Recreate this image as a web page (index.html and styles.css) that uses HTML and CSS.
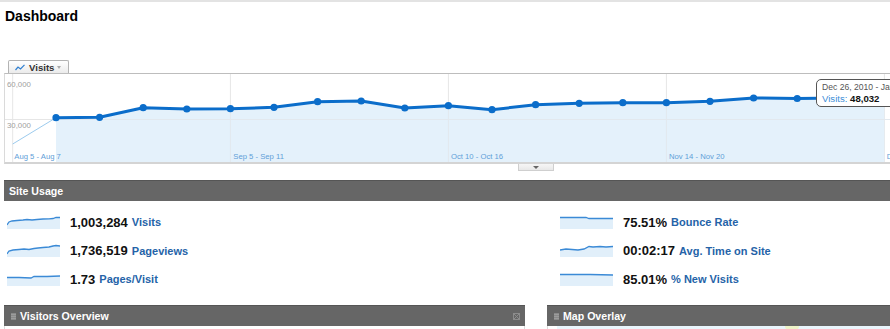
FILE: index.html
```html
<!DOCTYPE html>
<html>
<head>
<meta charset="utf-8">
<link rel="stylesheet" href="styles.css">
</head>
<body>
<div class="topline"></div>
<div class="page">
  <h1 class="title">Dashboard</h1>
  <div class="tabs">
    <div class="tab">
      <svg class="tab-icon" width="10" height="7" viewBox="0 0 10 7"><polyline points="0.5,6 3,3 5.5,5 9.5,0.8" fill="none" stroke="#2f7fd0" stroke-width="1.2"/></svg>
      <span class="tab-label">Visits</span>
      <span class="tab-caret"></span>
    </div>
  </div>
  <div class="chart">
    <svg class="chart-svg" width="885" height="88" viewBox="0 0 885 88">
      <g stroke="#e6e6e6" stroke-width="1">
        <line x1="7.7" y1="0" x2="7.7" y2="88"/>
        <line x1="225.4" y1="0" x2="225.4" y2="88"/>
        <line x1="443.4" y1="0" x2="443.4" y2="88"/>
        <line x1="661.4" y1="0" x2="661.4" y2="88"/>
        <line x1="879.4" y1="0" x2="879.4" y2="88"/>
        <line x1="0" y1="45.5" x2="885" y2="45.5"/>
      </g>
      <polygon fill="#e4f1fb" points="51,88 51,43.7 94.6,43.3 138.2,33.7 181.8,35 225.4,34.7 269,33.3 312.6,27.7 356.2,27 399.8,34 443.4,31.7 487,35.7 530.6,30.7 574.2,29.3 617.8,28.7 661.4,28.7 705,27.3 748.6,24 792.2,24.5 835.8,24 879.4,24 879.4,88"/>
      <g stroke="#e2e8ee" stroke-width="1">
        <line x1="51" y1="45.5" x2="885" y2="45.5"/>
        <line x1="225.4" y1="34" x2="225.4" y2="88"/>
        <line x1="443.4" y1="31" x2="443.4" y2="88"/>
        <line x1="661.4" y1="28" x2="661.4" y2="88"/>
      </g>
      <line x1="7.7" y1="70" x2="51" y2="43.7" stroke="#9ccbee" stroke-width="1"/>
      <polyline fill="none" stroke="#0b6dca" stroke-width="3" stroke-linejoin="round" points="51,43.7 94.6,43.3 138.2,33.7 181.8,35 225.4,34.7 269,33.3 312.6,27.7 356.2,27 399.8,34 443.4,31.7 487,35.7 530.6,30.7 574.2,29.3 617.8,28.7 661.4,28.7 705,27.3 748.6,24 792.2,24.5 835.8,24"/>
      <g fill="#0b6dca">
        <circle cx="51" cy="43.7" r="3.6"/>
        <circle cx="94.6" cy="43.3" r="3.6"/>
        <circle cx="138.2" cy="33.7" r="3.6"/>
        <circle cx="181.8" cy="35" r="3.6"/>
        <circle cx="225.4" cy="34.7" r="3.6"/>
        <circle cx="269" cy="33.3" r="3.6"/>
        <circle cx="312.6" cy="27.7" r="3.6"/>
        <circle cx="356.2" cy="27" r="3.6"/>
        <circle cx="399.8" cy="34" r="3.6"/>
        <circle cx="443.4" cy="31.7" r="3.6"/>
        <circle cx="487" cy="35.7" r="3.6"/>
        <circle cx="530.6" cy="30.7" r="3.6"/>
        <circle cx="574.2" cy="29.3" r="3.6"/>
        <circle cx="617.8" cy="28.7" r="3.6"/>
        <circle cx="661.4" cy="28.7" r="3.6"/>
        <circle cx="705" cy="27.3" r="3.6"/>
        <circle cx="748.6" cy="24" r="3.6"/>
        <circle cx="792.2" cy="24.5" r="3.6"/>
      </g>
      <g class="ylab" font-family="Liberation Sans, Arial, sans-serif" font-size="7.8" fill="#a0a0a0">
        <text x="2" y="13">60,000</text>
        <text x="2" y="54">30,000</text>
      </g>
      <g class="xlab" font-family="Liberation Sans, Arial, sans-serif" font-size="7.7" fill="#5fa0d8">
        <text x="9.3" y="84.5">Aug 5 - Aug 7</text>
        <text x="228.3" y="84.5">Sep 5 - Sep 11</text>
        <text x="446" y="84.5">Oct 10 - Oct 16</text>
        <text x="664" y="84.5">Nov 14 - Nov 20</text>
        <text x="881.7" y="84.5">Dec 26 - Jan 1</text>
      </g>
    </svg>
    <div class="tooltip">
      <div class="tip-date">Dec 26, 2010 - Jan 1</div>
      <div class="tip-val"><span class="tip-key">Visits:</span> <b>48,032</b></div>
    </div>
  </div>
  <div class="expander"><span class="exp-tri"></span></div>

  <section class="usage">
    <div class="bar">Site Usage</div>
    <div class="metrics">
      <div class="metric">
        <svg class="spark" width="53" height="13" viewBox="0 0 53 13"><path d="M0,9 L2,6 L5,5 L10,4.5 L16,4 L20,3.5 L25,4 L30,3.5 L36,3 L42,2.8 L46,2.5 L49,1.5 L53,1.5 L53,13 L0,13 Z" fill="#e1effa"/><path d="M0,9 L2,6 L5,5 L10,4.5 L16,4 L20,3.5 L25,4 L30,3.5 L36,3 L42,2.8 L46,2.5 L49,1.5 L53,1.5" fill="none" stroke="#3b8ad6" stroke-width="1.3"/></svg>
        <span class="num">1,003,284</span><span class="lbl">Visits</span>
      </div>
      <div class="metric">
        <svg class="spark" width="53" height="13" viewBox="0 0 53 13"><path d="M0,10 L2,7 L6,6 L12,5.5 L17,5 L22,5.5 L27,4.5 L31,4 L36,3.5 L42,3 L46,2 L49,1.5 L53,2 L53,13 L0,13 Z" fill="#e1effa"/><path d="M0,10 L2,7 L6,6 L12,5.5 L17,5 L22,5.5 L27,4.5 L31,4 L36,3.5 L42,3 L46,2 L49,1.5 L53,2" fill="none" stroke="#3b8ad6" stroke-width="1.3"/></svg>
        <span class="num">1,736,519</span><span class="lbl">Pageviews</span>
      </div>
      <div class="metric">
        <svg class="spark" width="53" height="13" viewBox="0 0 53 13"><path d="M0,4.5 L12,4.5 L24,5 L27,3.5 L40,3.5 L53,3 L53,13 L0,13 Z" fill="#e1effa"/><path d="M0,4.5 L12,4.5 L24,5 L27,3.5 L40,3.5 L53,3" fill="none" stroke="#3b8ad6" stroke-width="1.3"/></svg>
        <span class="num">1.73</span><span class="lbl">Pages/Visit</span>
      </div>
      <div class="metric">
        <svg class="spark" width="53" height="13" viewBox="0 0 53 13"><path d="M0,1.5 L26,1.5 L29,2.5 L53,2.5 L53,13 L0,13 Z" fill="#e1effa"/><path d="M0,1.5 L26,1.5 L29,2.5 L53,2.5" fill="none" stroke="#3b8ad6" stroke-width="1.3"/></svg>
        <span class="num">75.51%</span><span class="lbl">Bounce Rate</span>
      </div>
      <div class="metric">
        <svg class="spark" width="53" height="13" viewBox="0 0 53 13"><path d="M0,6 L6,5 L12,5.5 L18,6 L24,5 L29,2.5 L33,3 L40,2.5 L46,3 L53,2.5 L53,13 L0,13 Z" fill="#e1effa"/><path d="M0,6 L6,5 L12,5.5 L18,6 L24,5 L29,2.5 L33,3 L40,2.5 L46,3 L53,2.5" fill="none" stroke="#3b8ad6" stroke-width="1.3"/></svg>
        <span class="num">00:02:17</span><span class="lbl">Avg. Time on Site</span>
      </div>
      <div class="metric">
        <svg class="spark" width="53" height="13" viewBox="0 0 53 13"><path d="M0,1.5 L30,1.5 L53,2 L53,13 L0,13 Z" fill="#e1effa"/><path d="M0,1.5 L30,1.5 L53,2" fill="none" stroke="#3b8ad6" stroke-width="1.3"/></svg>
        <span class="num">85.01%</span><span class="lbl">% New Visits</span>
      </div>
    </div>
  </section>

  <div class="panels">
    <div class="panel">
      <div class="phead"><span class="grip"></span><span class="ptitle">Visitors Overview</span><span class="close"></span></div>
      <div class="pbody"></div>
    </div>
    <div class="panel">
      <div class="phead"><span class="grip"></span><span class="ptitle">Map Overlay</span></div>
      <div class="pbody map"><div class="map-area"><span class="land"></span></div></div>
    </div>
  </div>
</div>
</body>
</html>
```

FILE: styles.css
```css
* { box-sizing: border-box; }
html, body { margin: 0; padding: 0; }
body {
  font-family: "Liberation Sans", Arial, sans-serif;
  background: #fff;
  width: 890px;
  height: 329px;
  overflow: hidden;
}
.topline { height: 2px; background: #e3e3e3; }
.page { padding-left: 4px; }
.title {
  margin: 6px 0 0 1px;
  font-size: 14px;
  line-height: 16px;
  font-weight: bold;
  color: #000;
}
.tabs {
  margin-top: 36px;
  height: 13px;
  padding-left: 4px;
  display: flex;
}
.tab {
  width: 61px;
  height: 13px;
  border: 1px solid #b3b3b3;
  border-bottom: none;
  border-radius: 2px 2px 0 0;
  background: linear-gradient(#ffffff, #ebebeb);
  display: flex;
  align-items: center;
  padding-left: 6px;
}
.tab-icon { display: block; margin-right: 4px; }
.tab-label { font-size: 9.6px; font-weight: bold; color: #333; }
.tab-caret {
  margin-left: 3px;
  width: 0; height: 0;
  border-left: 2.5px solid transparent;
  border-right: 2.5px solid transparent;
  border-top: 3px solid #aaa;
}
.chart {
  position: relative;
  height: 91px;
  border-top: 1px solid #bdbdbd;
  border-left: 1px solid #dadada;
  border-bottom: 2px solid #d4d4d4;
  overflow: hidden;
}
.chart-svg { display: block; }
.tooltip {
  position: absolute;
  left: 811px;
  top: 5px;
  width: 100px;
  height: 28px;
  border: 1.5px solid #555;
  border-radius: 5px;
  background: #fff;
  padding: 2px 0 0 5px;
}
.tip-date { font-size: 8.6px; line-height: 11px; color: #555; white-space: nowrap; }
.tip-val { font-size: 9.6px; line-height: 12px; white-space: nowrap; }
.tip-key { color: #3f8fd8; }
.tip-val b { color: #111; }
.expander {
  margin-left: 514px;
  width: 36px;
  height: 7px;
  border: 1px solid #cfcfcf;
  border-top: none;
  background: linear-gradient(#f6f6f6, #e8e8e8);
  display: flex;
  justify-content: center;
  align-items: center;
}
.exp-tri {
  width: 0; height: 0;
  border-left: 3px solid transparent;
  border-right: 3px solid transparent;
  border-top: 3px solid #666;
}
.usage { margin-top: 9px; }
.bar {
  height: 21px;
  border-top: 1px solid #555;
  background: #666;
  color: #fff;
  font-weight: bold;
  font-size: 10.6px;
  line-height: 20px;
  padding-left: 5px;
}
.metrics {
  display: grid;
  grid-template-columns: 553px 1fr;
  grid-template-rows: repeat(3, 28.5px);
  grid-auto-flow: column;
  padding: 7px 0 0 3px;
}
.metric { display: flex; align-items: center; }
.spark { display: block; margin-right: 10px; }
.num { font-size: 13px; font-weight: bold; color: #111; }
.lbl { font-size: 11px; font-weight: bold; color: #2563a8; margin-left: 4px; }
.panels {
  margin-top: 11.5px;
  display: grid;
  grid-template-columns: 521px 1fr;
  column-gap: 22px;
}
.phead {
  height: 21px;
  border-top: 1px solid #555;
  background: #666;
  display: flex;
  align-items: center;
  padding-left: 7px;
  color: #fff;
}
.grip {
  width: 5px;
  height: 7px;
  background: repeating-linear-gradient(#8a8a8a 0 1px, #9c9c9c 1px 2px);
  margin-right: 4px;
}
.ptitle { font-size: 10.6px; font-weight: bold; }
.close {
  margin-left: auto;
  margin-right: 5px;
  width: 7px;
  height: 7px;
  border: 1px solid #8c8c8c;
  background:
    linear-gradient(45deg, transparent 43%, #8c8c8c 43% 57%, transparent 57%),
    linear-gradient(-45deg, transparent 43%, #8c8c8c 43% 57%, transparent 57%);
}
.pbody {
  height: 10px;
  border-left: 1px solid #dcdcdc;
  border-right: 1px solid #dcdcdc;
}
.pbody.map { padding-left: 9px; border-right: none; }
.map-area {
  position: relative;
  height: 10px;
  background: #eaf5fc;
}
.land {
  position: absolute;
  left: 228px;
  top: 0;
  width: 14px;
  height: 4px;
  border-radius: 0 0 7px 7px;
  background: #eef3c8;
}
```
